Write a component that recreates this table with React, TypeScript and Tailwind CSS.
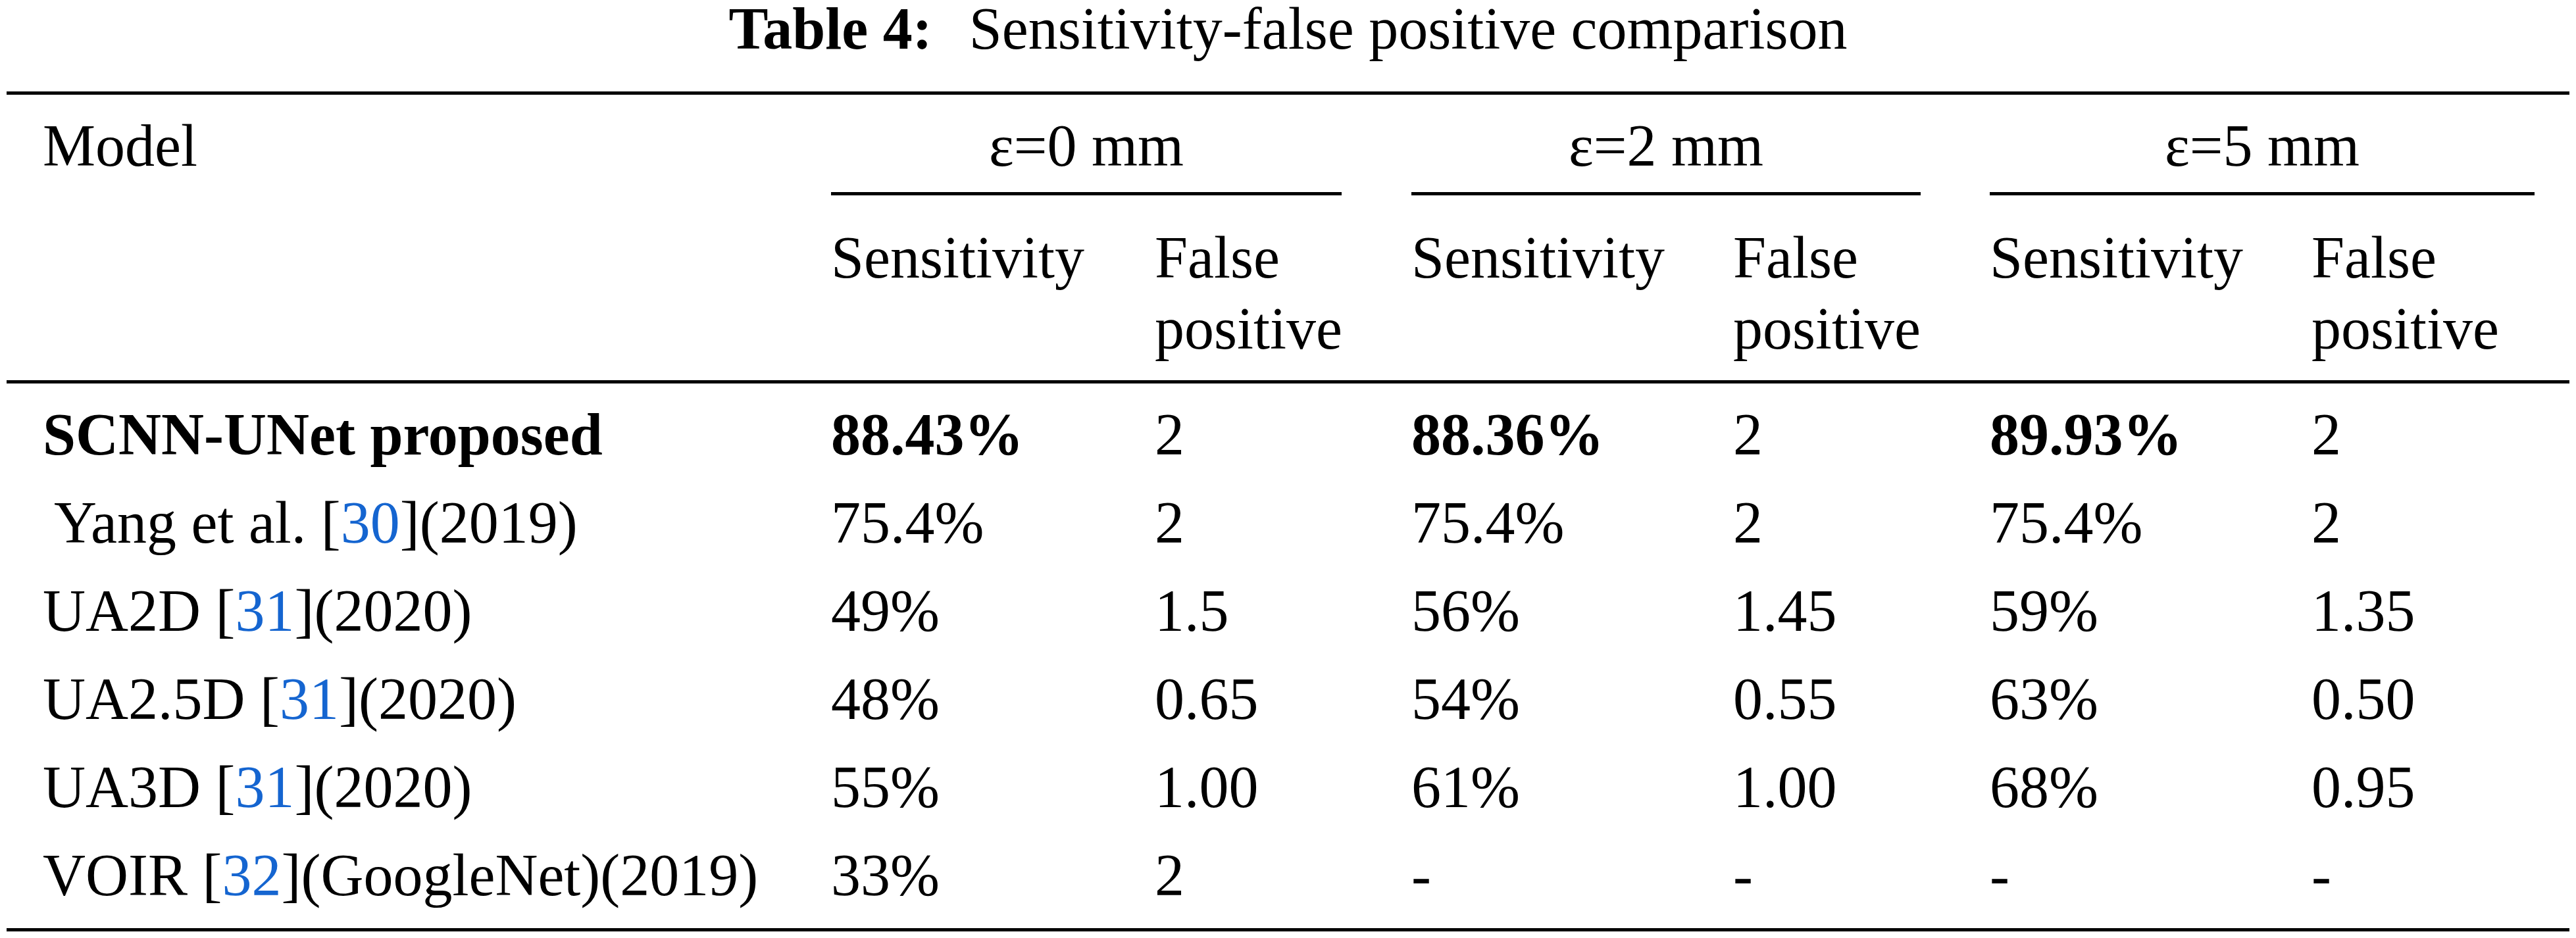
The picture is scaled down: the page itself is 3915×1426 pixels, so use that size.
import type { ReactNode } from 'react'

type Row = {
  name: ReactNode
  values: string[]
  bold?: boolean
}

// column widths measured off the reference (model, then sensitivity / false positive pairs)
const COLS = 'grid grid-cols-[1253px_492px_390px_489px_390px_489px_392px]'

function Ref({ n }: { n: number }) {
  return (
    <>
      [<span className="text-[#1565d0]">{n}</span>]
    </>
  )
}

const ROWS: Row[] = [
  {
    name: 'SCNN-UNet proposed',
    values: ['88.43%', '2', '88.36%', '2', '89.93%', '2'],
    bold: true,
  },
  {
    name: (
      <span className="pl-[17px]">
        Yang et al. <Ref n={30} />
        (2019)
      </span>
    ),
    values: ['75.4%', '2', '75.4%', '2', '75.4%', '2'],
  },
  {
    name: (
      <>
        UA2D <Ref n={31} />
        (2020)
      </>
    ),
    values: ['49%', '1.5', '56%', '1.45', '59%', '1.35'],
  },
  {
    name: (
      <>
        UA2.5D <Ref n={31} />
        (2020)
      </>
    ),
    values: ['48%', '0.65', '54%', '0.55', '63%', '0.50'],
  },
  {
    name: (
      <>
        UA3D <Ref n={31} />
        (2020)
      </>
    ),
    values: ['55%', '1.00', '61%', '1.00', '68%', '0.95'],
  },
  {
    name: (
      <>
        VOIR <Ref n={32} />
        (GoogleNet)(2019)
      </>
    ),
    values: ['33%', '2', '-', '-', '-', '-'],
  },
]

const GROUPS = [
  { label: 'ε=0 mm', pad: 'pr-[106px]' },
  { label: 'ε=2 mm', pad: 'pr-[105px]' },
  { label: 'ε=5 mm', pad: 'pr-[53px]' },
]

export default function App() {
  return (
    <div className="min-h-screen bg-white text-black font-['Liberation_Serif','Times_New_Roman',serif] text-[90px] leading-[108px]">
      <h1 className="text-center leading-[88px]">
        <span className="font-bold">Table 4:</span>
        <span className="ml-[56px]">Sensitivity-false positive comparison</span>
      </h1>

      <div className="mt-[51px] ml-[10px] w-[3895px]">
        {/* header */}
        <div className={`${COLS} border-y-[5px] border-black`}>
          <div className="row-span-2 pl-[55px] pt-[24px]">Model</div>
          {GROUPS.map((g) => (
            <div key={g.label} className={`col-span-2 pt-[24px] ${g.pad}`}>
              <div className="border-b-[5px] border-black pb-[16px] text-center">{g.label}</div>
            </div>
          ))}
          {GROUPS.map((g) => (
            <div key={g.label} className="contents">
              <div className="pt-[41px] pb-[24px]">Sensitivity</div>
              <div className="pt-[41px] pb-[24px]">False positive</div>
            </div>
          ))}
        </div>

        {/* body */}
        <div className="border-b-[5px] border-black">
          {ROWS.map((row, i) => {
            const last = i === ROWS.length - 1
            return (
              <div key={i} className={`${COLS} pt-[24px] ${last ? 'pb-[26px]' : 'pb-[2px]'}`}>
                <div className={`whitespace-nowrap pl-[55px] ${row.bold ? 'font-bold' : ''}`}>{row.name}</div>
                {row.values.map((v, j) => (
                  <div key={j} className={row.bold && j % 2 === 0 ? 'font-bold' : ''}>
                    {v}
                  </div>
                ))}
              </div>
            )
          })}
        </div>
      </div>
    </div>
  )
}
